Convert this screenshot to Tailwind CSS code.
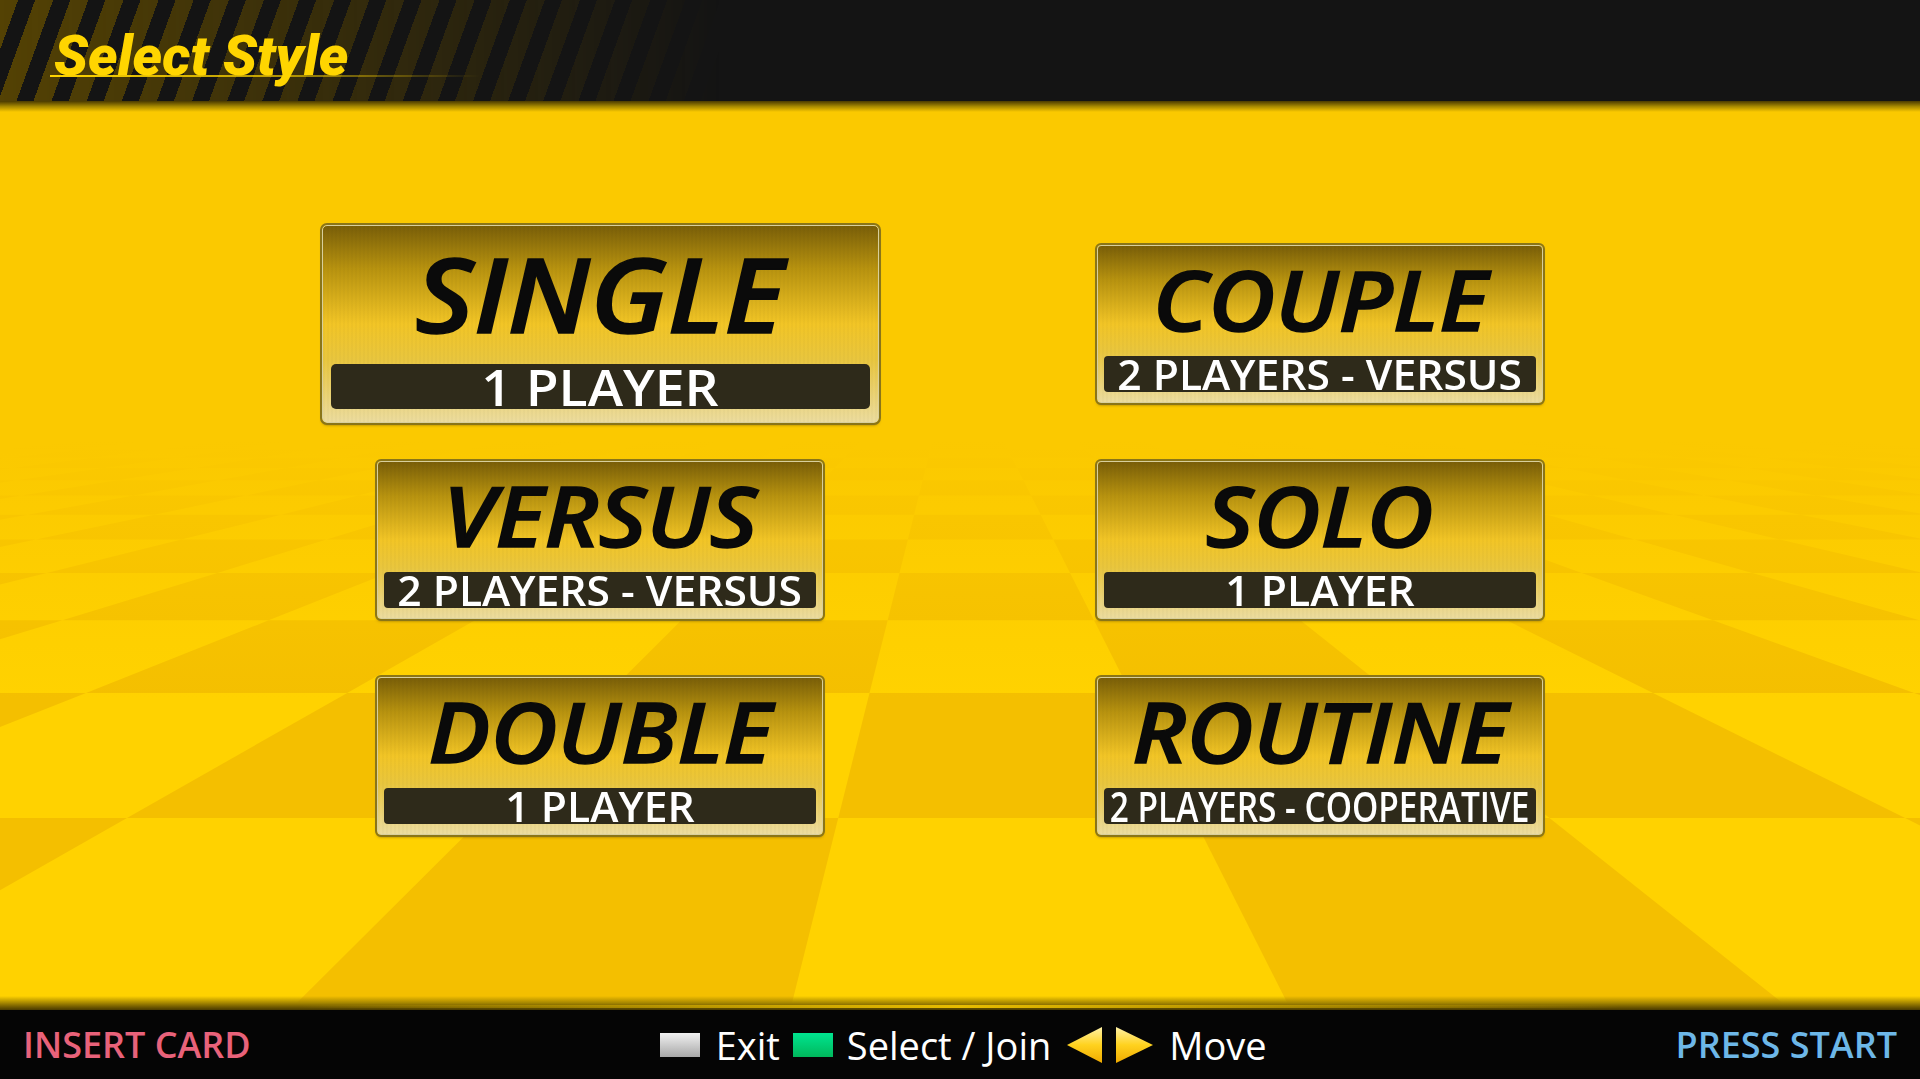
<!DOCTYPE html>
<html lang="en">
	<head>
		<meta charset="UTF-8" />
		<script src="https://cdn.jsdelivr.net/npm/@tailwindcss/browser@4"></script>
		<title>Select Style</title>
	</head>
	<body class="h-screen overflow-hidden flex flex-col bg-[#fbc900] font-['Open_Sans',sans-serif]">
		<!-- HEADER -->
		<header class="relative h-[101px] shrink-0 bg-[#141414] pl-[54px] pt-[26px]">
			<div class="absolute inset-0 bg-[repeating-linear-gradient(110deg,#544204_0px,#544204_17px,transparent_17px,transparent_33px)] [mask-image:linear-gradient(to_right,black,transparent_720px)]"></div>
			<h1 class="relative font-['Roboto',sans-serif] font-black italic text-[56px] leading-[60px] text-[#ffd500]">Select Style</h1>
			<div class="absolute left-[50px] top-[75px] h-[2px] w-[430px] bg-linear-to-r from-[#ffd500] via-[#ffd500]/70 to-transparent"></div>
		</header>

		<!-- MENU -->
		<main class="relative flex-1 pt-[115px]">
			<svg class="absolute inset-0 w-full h-full" width="1920" height="909" viewBox="0 101 1920 909" preserveAspectRatio="none">
				<defs>
					<linearGradient id="light" gradientUnits="userSpaceOnUse" x1="0" y1="450" x2="0" y2="700">
						<stop offset="0" stop-color="#fbc900" />
						<stop offset="1" stop-color="#ffd200" />
					</linearGradient>
					<linearGradient id="dark" gradientUnits="userSpaceOnUse" x1="0" y1="440" x2="0" y2="700">
						<stop offset="0" stop-color="#fbc900" />
						<stop offset="1" stop-color="#f4bf00" />
					</linearGradient>
				</defs>
				<rect x="0" y="101" width="1920" height="909" fill="#fbc900" />
				<rect x="0" y="450" width="1920" height="560" fill="url(#light)" />
				<g id="floor" fill="url(#dark)"></g>
			</svg>
			<div class="absolute top-0 inset-x-0 h-[11px] bg-linear-to-b from-[#4a3a00] via-[#a88a00] to-transparent"></div>
			<div class="absolute bottom-0 inset-x-0 h-[14px] bg-linear-to-b from-transparent via-[#a58600] to-[#4a3a00]"></div>
			<div class="absolute bottom-[2px] inset-x-[300px] h-[3px] bg-linear-to-r from-transparent via-[#e8bd00] to-transparent"></div>

			<div class="relative grid grid-cols-[720px_720px] auto-rows-[216px] justify-center items-center justify-items-center">
				<div class="w-[557px] h-[198px] flex flex-col px-[8px] pb-[13px] rounded-[5px] border border-[#d8cf9c] outline-2 outline-[#8a7518] bg-[repeating-linear-gradient(90deg,rgba(0,0,0,0.02)_0px,rgba(0,0,0,0.02)_2px,transparent_2px,transparent_4px),linear-gradient(to_bottom,#7a5f08,#b8930f_22%,#f2c526_50%,#e9c63e_68%,#ecdc9e_100%)] shadow-[0_2px_3px_rgba(80,60,0,0.6)]">
					<div class="flex-1 flex items-center justify-center pb-[4px] font-semibold italic text-[103px] leading-none text-[#0a0a0a] [-webkit-text-stroke:1.5px_#0a0a0a]"><span class="scale-x-[1.1]">SINGLE</span></div>
					<div class="h-[45px] flex items-center justify-center rounded-[5px] bg-[#2e2a1a] font-semibold text-[50px] leading-none text-white"><span class="scale-x-[1.07]">1 PLAYER</span></div>
				</div>
				<div class="w-[446px] h-[158px] flex flex-col px-[6px] pb-[10px] rounded-[4px] border border-[#d8cf9c] outline-2 outline-[#8a7518] bg-[repeating-linear-gradient(90deg,rgba(0,0,0,0.02)_0px,rgba(0,0,0,0.02)_2px,transparent_2px,transparent_4px),linear-gradient(to_bottom,#7a5f08,#b8930f_22%,#f2c526_50%,#e9c63e_68%,#ecdc9e_100%)] shadow-[0_2px_3px_rgba(80,60,0,0.6)]">
					<div class="flex-1 flex items-center justify-center pb-[4px] font-semibold italic text-[84px] leading-none text-[#0a0a0a] [-webkit-text-stroke:1.5px_#0a0a0a]"><span class="scale-x-[1.1]">COUPLE</span></div>
					<div class="h-[36px] flex items-center justify-center rounded-[4px] bg-[#2e2a1a] font-semibold text-[41px] leading-none text-white"><span class="scale-x-[1.04]">2 PLAYERS - VERSUS</span></div>
				</div>
				<div class="w-[446px] h-[158px] flex flex-col px-[6px] pb-[10px] rounded-[4px] border border-[#d8cf9c] outline-2 outline-[#8a7518] bg-[repeating-linear-gradient(90deg,rgba(0,0,0,0.02)_0px,rgba(0,0,0,0.02)_2px,transparent_2px,transparent_4px),linear-gradient(to_bottom,#7a5f08,#b8930f_22%,#f2c526_50%,#e9c63e_68%,#ecdc9e_100%)] shadow-[0_2px_3px_rgba(80,60,0,0.6)]">
					<div class="flex-1 flex items-center justify-center pb-[4px] font-semibold italic text-[84px] leading-none text-[#0a0a0a] [-webkit-text-stroke:1.5px_#0a0a0a]"><span class="scale-x-[1.1]">VERSUS</span></div>
					<div class="h-[36px] flex items-center justify-center rounded-[4px] bg-[#2e2a1a] font-semibold text-[41px] leading-none text-white"><span class="scale-x-[1.04]">2 PLAYERS - VERSUS</span></div>
				</div>
				<div class="w-[446px] h-[158px] flex flex-col px-[6px] pb-[10px] rounded-[4px] border border-[#d8cf9c] outline-2 outline-[#8a7518] bg-[repeating-linear-gradient(90deg,rgba(0,0,0,0.02)_0px,rgba(0,0,0,0.02)_2px,transparent_2px,transparent_4px),linear-gradient(to_bottom,#7a5f08,#b8930f_22%,#f2c526_50%,#e9c63e_68%,#ecdc9e_100%)] shadow-[0_2px_3px_rgba(80,60,0,0.6)]">
					<div class="flex-1 flex items-center justify-center pb-[4px] font-semibold italic text-[84px] leading-none text-[#0a0a0a] [-webkit-text-stroke:1.5px_#0a0a0a]"><span class="scale-x-[1.1]">SOLO</span></div>
					<div class="h-[36px] flex items-center justify-center rounded-[4px] bg-[#2e2a1a] font-semibold text-[41px] leading-none text-white"><span class="scale-x-[1.04]">1 PLAYER</span></div>
				</div>
				<div class="w-[446px] h-[158px] flex flex-col px-[6px] pb-[10px] rounded-[4px] border border-[#d8cf9c] outline-2 outline-[#8a7518] bg-[repeating-linear-gradient(90deg,rgba(0,0,0,0.02)_0px,rgba(0,0,0,0.02)_2px,transparent_2px,transparent_4px),linear-gradient(to_bottom,#7a5f08,#b8930f_22%,#f2c526_50%,#e9c63e_68%,#ecdc9e_100%)] shadow-[0_2px_3px_rgba(80,60,0,0.6)]">
					<div class="flex-1 flex items-center justify-center pb-[4px] font-semibold italic text-[84px] leading-none text-[#0a0a0a] [-webkit-text-stroke:1.5px_#0a0a0a]"><span class="scale-x-[1.1]">DOUBLE</span></div>
					<div class="h-[36px] flex items-center justify-center rounded-[4px] bg-[#2e2a1a] font-semibold text-[41px] leading-none text-white"><span class="scale-x-[1.04]">1 PLAYER</span></div>
				</div>
				<div class="w-[446px] h-[158px] flex flex-col px-[6px] pb-[10px] rounded-[4px] border border-[#d8cf9c] outline-2 outline-[#8a7518] bg-[repeating-linear-gradient(90deg,rgba(0,0,0,0.02)_0px,rgba(0,0,0,0.02)_2px,transparent_2px,transparent_4px),linear-gradient(to_bottom,#7a5f08,#b8930f_22%,#f2c526_50%,#e9c63e_68%,#ecdc9e_100%)] shadow-[0_2px_3px_rgba(80,60,0,0.6)]">
					<div class="flex-1 flex items-center justify-center pb-[4px] font-semibold italic text-[84px] leading-none text-[#0a0a0a] [-webkit-text-stroke:1.5px_#0a0a0a]"><span class="scale-x-[1.1]">ROUTINE</span></div>
					<div class="h-[36px] flex items-center justify-center rounded-[4px] bg-[#2e2a1a] font-semibold text-[41px] leading-none text-white whitespace-nowrap"><span class="scale-x-[0.815]">2 PLAYERS - COOPERATIVE</span></div>
				</div>
			</div>
		</main>

		<!-- FOOTER -->
		<footer class="relative h-[69px] shrink-0 bg-[#050505] flex items-center justify-between px-[23px] text-[36px] leading-none">
			<span class="font-semibold text-[#e8627a]">INSERT CARD</span>
			<div class="flex items-center font-medium text-[38px] text-white">
				<span class="w-[40px] h-[24px] bg-linear-to-b from-[#f2f2f2] to-[#a8a8a8]"></span>
				<span class="ml-[16px]">Exit</span>
				<span class="ml-[13px] w-[40px] h-[24px] bg-linear-to-b from-[#00e590] to-[#00b85c]"></span>
				<span class="ml-[14px]">Select / Join</span>
				<svg class="ml-[16px]" width="86" height="36" viewBox="0 0 86 36">
					<defs>
						<linearGradient id="arrow" x1="0" y1="0" x2="0" y2="1">
							<stop offset="0" stop-color="#fff2a8" />
							<stop offset="0.5" stop-color="#ffd21e" />
							<stop offset="1" stop-color="#f0aa00" />
						</linearGradient>
					</defs>
					<polygon points="0,18 35,0 35,36" fill="url(#arrow)" />
					<polygon points="49,0 86,18 49,36" fill="url(#arrow)" />
				</svg>
				<span class="ml-[16px]">Move</span>
			</div>
			<span class="font-semibold text-[#6db7e8]">PRESS START</span>
		</footer>

		<script>
			// damier en perspective, point de fuite (956,347)
			const floor = document.getElementById("floor");
			const rowY = (m) => 347 + 1 / (0.002123 + 0.000768 * m);
			const colU = (k) => -0.25 + 0.755 * k;
			let points = "";
			for (let m = -1; m < 24; m++) {
				for (let k = -40; k < 40; k++) {
					if ((k + m + 400) % 2 != 0) continue;
					// la rangee m va de rowY(m) (bas) a rowY(m + 1) (haut)
					const y1 = rowY(m);
					const y2 = rowY(m + 1);
					const a = 956 + colU(k) * (y1 - 347);
					const b = 956 + colU(k + 1) * (y1 - 347);
					const c = 956 + colU(k + 1) * (y2 - 347);
					const d = 956 + colU(k) * (y2 - 347);
					points += `<polygon points="${a},${y1} ${b},${y1} ${c},${y2} ${d},${y2}" />`;
				}
			}
			floor.innerHTML = points;
		</script>
	</body>
</html>
